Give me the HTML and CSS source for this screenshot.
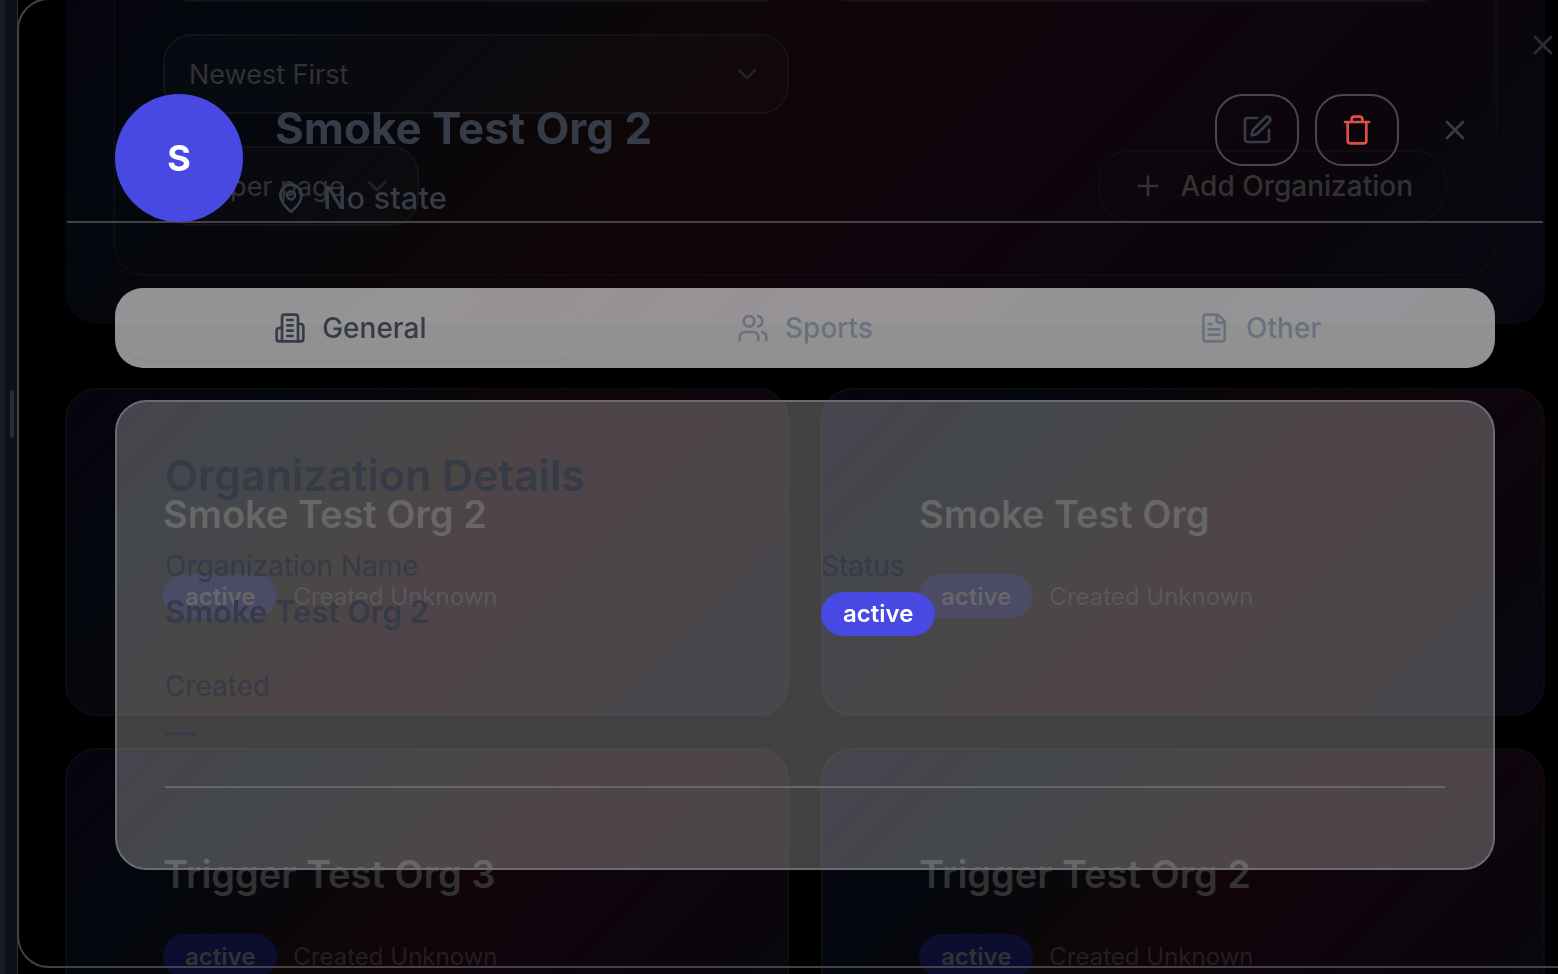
FILE: index.html
```html
<!DOCTYPE html>
<html lang="en">
<head>
<meta charset="utf-8">
<title>Organizations</title>
<link rel="stylesheet" href="styles.css">
</head>
<body>
<div class="app">
  <aside class="rail"><span class="rail-grip"></span></aside>
  <main class="page">
    <section class="toolbar">
      <div class="filters">
        <label class="field"><select aria-label="State"><option>All States</option></select></label>
        <label class="field"><select aria-label="Status"><option>All Statuses</option></select></label>
        <label class="field"><select aria-label="Sort order"><option>Newest First</option></select>
          <svg class="chevron" viewBox="0 0 24 24"><path d="m6 9 6 6 6-6"/></svg></label>
        <div class="filter-actions">
          <label class="field field-small"><select aria-label="Page size"><option>20 per page</option></select>
            <svg class="chevron" viewBox="0 0 24 24"><path d="m6 9 6 6 6-6"/></svg></label>
          <button class="add" type="button"><svg class="icon" viewBox="0 0 24 24"><path d="M5 12h14M12 5v14"/></svg>Add Organization</button>
        </div>
      </div>
    </section>
    <section class="cards">
      <article class="card"><h3>Smoke Test Org 2</h3><div class="meta"><span class="badge">active</span><span>Created Unknown</span></div></article>
      <article class="card"><h3>Smoke Test Org</h3><div class="meta"><span class="badge">active</span><span>Created Unknown</span></div></article>
      <article class="card"><h3>Trigger Test Org 3</h3><div class="meta"><span class="badge">active</span><span>Created Unknown</span></div></article>
      <article class="card"><h3>Trigger Test Org 2</h3><div class="meta"><span class="badge">active</span><span>Created Unknown</span></div></article>
    </section>
  </main>
</div>

<div class="dialog" role="dialog" aria-labelledby="org-name">
  <button class="dialog-close" type="button" aria-label="Close dialog"><svg class="icon" viewBox="0 0 24 24"><path d="M18 6 6 18M6 6l12 12"/></svg></button>
  <header class="dialog-header">
    <div class="avatar">S</div>
    <div class="identity">
      <h1 id="org-name">Smoke Test Org 2</h1>
      <p class="place"><svg class="icon" viewBox="0 0 24 24"><path d="M20 10c0 5-5.500 10.200-7.400 11.800a1 1 0 0 1-1.200 0C9.500 20.200 4 15 4 10a8 8 0 0 1 16 0"/><circle cx="12" cy="10" r="3"/></svg>No state</p>
    </div>
    <div class="actions">
      <button class="action" type="button" aria-label="Edit"><svg class="icon" viewBox="0 0 24 24"><path d="M12 3H5a2 2 0 0 0-2 2v14a2 2 0 0 0 2 2h14a2 2 0 0 0 2-2v-7"/><path d="M18.375 2.625a1 1 0 0 1 3 3l-9.013 9.014a2 2 0 0 1-.853.505l-2.873.84a.5.5 0 0 1-.62-.62l.84-2.873a2 2 0 0 1 .506-.852z"/></svg></button>
      <button class="action danger" type="button" aria-label="Delete"><svg class="icon" viewBox="0 0 24 24"><path d="M3 6h18M19 6v14a2 2 0 0 1-2 2H7a2 2 0 0 1-2-2V6M8 6V4a2 2 0 0 1 2-2h4a2 2 0 0 1 2 2v2"/></svg></button>
      <button class="action plain" type="button" aria-label="Close"><svg class="icon" viewBox="0 0 24 24"><path d="M18 6 6 18M6 6l12 12"/></svg></button>
    </div>
  </header>
  <div class="dialog-body">
    <div class="tabs" role="tablist">
      <button class="tab active" type="button" role="tab" aria-selected="true"><svg class="icon" viewBox="0 0 24 24"><path d="M6 22V4a2 2 0 0 1 2-2h8a2 2 0 0 1 2 2v18Z"/><path d="M6 12H4a2 2 0 0 0-2 2v6a2 2 0 0 0 2 2h2M18 9h2a2 2 0 0 1 2 2v9a2 2 0 0 1-2 2h-2M10 6h4M10 10h4M10 14h4M10 18h4"/></svg>General</button>
      <button class="tab" type="button" role="tab" aria-selected="false"><svg class="icon" viewBox="0 0 24 24"><path d="M16 21v-2a4 4 0 0 0-4-4H6a4 4 0 0 0-4 4v2"/><circle cx="9" cy="7" r="4"/><path d="M22 21v-2a4 4 0 0 0-3-3.870M16 3.130a4 4 0 0 1 0 7.750"/></svg>Sports</button>
      <button class="tab" type="button" role="tab" aria-selected="false"><svg class="icon" viewBox="0 0 24 24"><path d="M15 2H6a2 2 0 0 0-2 2v16a2 2 0 0 0 2 2h12a2 2 0 0 0 2-2V7Z"/><path d="M14 2v4a2 2 0 0 0 2 2h4M10 9H8M16 13H8M16 17H8"/></svg>Other</button>
    </div>
    <section class="details">
      <h2>Organization Details</h2>
      <dl class="facts">
        <div><dt>Organization Name</dt><dd>Smoke Test Org 2</dd></div>
        <div><dt>Status</dt><dd><span class="badge">active</span></dd></div>
        <div><dt>Created</dt><dd>—</dd></div>
      </dl>
      <hr>
    </section>
  </div>
</div>
</body>
</html>
```

FILE: styles.css
```css
* { box-sizing: border-box; }
body {
  margin: 0;
  background: #000;
  color: #323232;
  font-family: Inter, "Liberation Sans", sans-serif;
  font-size: 28px;
  overflow: hidden;
}
h1, h2, h3, p, dl, dd { margin: 0; }
button, select { font: inherit; color: inherit; background: none; border: 0; margin: 0; padding: 0; }
.icon, .chevron {
  width: 32px;
  height: 32px;
  flex: none;
  fill: none;
  stroke: currentColor;
  stroke-width: 2;
  stroke-linecap: round;
  stroke-linejoin: round;
}

.app { display: flex; height: 100vh; overflow: hidden; }
.rail {
  width: 18px;
  flex: none;
  display: flex;
  align-items: center;
  justify-content: flex-end;
  padding: 0 3px 146px 0;
  background: #10101a;
  border-left: 5px solid #181c25;
  border-right: 1px solid #303034;
}
.rail-grip { width: 4px; height: 48px; border-radius: 2px; background: #2a2a34; }
.page { flex: 1; margin-top: -176px; padding: 0 13px 0 47px; }

.toolbar, .card {
  background: linear-gradient(135deg, #08030f 0%, #03070e 20%, #07070c 32%, #0d0707 42%, #11040a 52%, #0f050c 65%, #0b060c 80%, #080711 100%);
  border-radius: 32px;
}
.toolbar { padding: 48px; }
.filters {
  display: grid;
  grid-template-columns: 1fr 1fr;
  gap: 32px;
  padding: 48px;
  border: 2px solid #0f0c11;
  border-radius: 32px;
}
.field { position: relative; height: 80px; font-size: 27px; }
.field select {
  width: 100%;
  height: 100%;
  padding: 0 24px;
  border: 2px solid #141317;
  border-radius: 28px;
  background: rgba(255, 255, 255, .015);
  appearance: none;
}
.field-small { width: 256px; }
.chevron { position: absolute; right: 26px; top: 24px; color: #222; }
.filter-actions { grid-column: 1 / -1; display: flex; align-items: center; justify-content: space-between; }
.add {
  display: flex;
  align-items: center;
  gap: 16px;
  height: 72px;
  padding: 0 32px;
  border: 2px solid #100c11;
  border-radius: 32px;
  font-weight: 500;
}

.cards { display: grid; grid-template-columns: 1fr 1fr; gap: 32px; margin-top: 64px; }
.card { padding: 96px; border: 2px solid #0e0b11; }
.card h3 { font-size: 38px; line-height: 56px; font-weight: 600; white-space: nowrap; }
.meta { display: flex; align-items: center; gap: 16px; margin-top: 32px; font-size: 24px; color: #202022; }
.badge {
  display: inline-flex;
  align-items: center;
  height: 44px;
  padding: 0 22px;
  border-radius: 22px;
  background: #0d0d30;
  color: #323232;
  font-size: 24px;
  font-weight: 600;
}

.dialog {
  position: fixed;
  top: -2px;
  bottom: 6px;
  left: 17px;
  right: -35px;
  padding: 48px;
  border: 2px solid #424247;
  border-radius: 32px;
  color: #363b48;
}
.dialog-close { position: absolute; top: 29px; right: 32px; height: 32px; color: #2a2d36; }
.dialog-header {
  display: flex;
  gap: 32px;
  padding: 46px 48px 0;
  border-bottom: 2px solid #424247;
}
.avatar {
  display: flex;
  align-items: center;
  justify-content: center;
  width: 128px;
  height: 128px;
  margin-bottom: -1px;
  border-radius: 50%;
  background: #4848e2;
  color: #fff;
  font-size: 36px;
  font-weight: 700;
}
.identity { flex: 1; }
.identity h1 { font-size: 44px; line-height: 68px; font-weight: 700; }
.place { display: flex; align-items: center; gap: 16px; margin-top: 16px; font-size: 31px; line-height: 40px; font-weight: 500; }
.actions { display: flex; align-items: flex-start; gap: 16px; }
.action {
  display: flex;
  align-items: center;
  justify-content: center;
  width: 84px;
  height: 72px;
  border: 2px solid #4b484d;
  border-radius: 28px;
}
.danger { color: #e05048; }
.plain { width: 80px; border-color: transparent; }

.dialog-body { padding: 65px 48px 0; }
.tabs {
  display: grid;
  grid-template-columns: repeat(3, 1fr);
  padding: 8px;
  border-radius: 28px;
  background: rgba(255, 255, 255, .57);
}
.tab {
  display: flex;
  align-items: center;
  justify-content: center;
  gap: 16px;
  height: 64px;
  border-radius: 24px;
  color: #697080;
  font-weight: 500;
}
.tab.active { color: #363b48; box-shadow: 0 1px 3px rgba(0, 0, 0, .06); }
.details {
  margin-top: 32px;
  padding: 48px 48px 80px;
  border: 2px solid #6b6b72;
  border-radius: 32px;
  background: rgba(255, 255, 255, .26);
}
.details h2 { font-size: 43px; line-height: 50px; font-weight: 600; }
.facts { display: grid; grid-template-columns: 1fr 1fr; gap: 32px; margin: 48px 0 34px; }
.facts dt { line-height: 36px; }
.facts dd { margin-top: 8px; font-size: 31px; line-height: 40px; font-weight: 600; }
.facts .badge { display: flex; width: fit-content; background: #4848e2; color: #fff; }
.details hr { margin: 0; border: 0; height: 2px; background: #66666b; }
```
